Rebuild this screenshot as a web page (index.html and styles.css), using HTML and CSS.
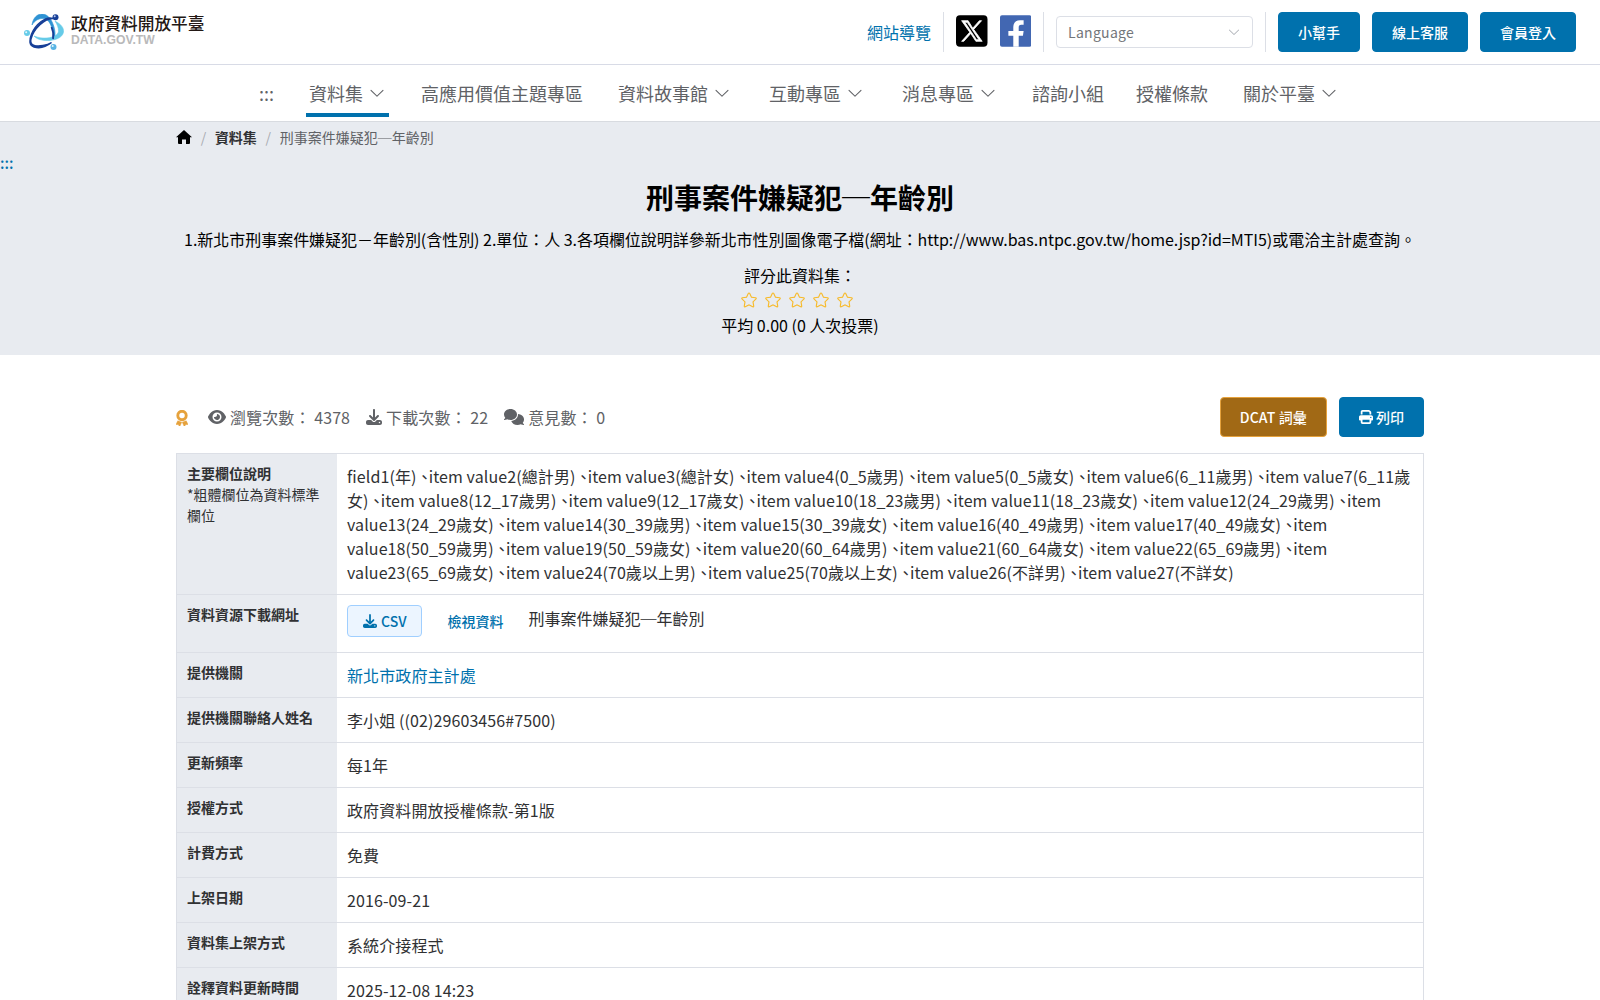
FILE: index.html
```html
<!DOCTYPE html>
<html lang="zh-Hant">
<head>
<meta charset="utf-8">
<title>刑事案件嫌疑犯─年齡別 | 政府資料開放平臺</title>
<link rel="stylesheet" href="styles.css">
</head>
<body>
<svg class="sprite" aria-hidden="true">
  <symbol id="i-down" viewBox="0 0 1024 1024"><path d="M831.9 340.9 512 652.700 192.100 340.900a30.600 30.600 0 0 0-42.700 0 29.100 29.100 0 0 0 0 41.600L489.700 714.200a32 32 0 0 0 44.600 0l340.300-331.700a29.100 29.100 0 0 0 0-41.700 30.600 30.600 0 0 0-42.700 0z"/></symbol>
  <symbol id="i-star" viewBox="0 0 1024 1024"><path d="m512 747.840 228.160 119.936a6.400 6.400 0 0 0 9.280-6.720l-43.520-254.080 184.512-179.904a6.400 6.400 0 0 0-3.520-10.880l-255.104-37.120L517.760 147.904a6.400 6.400 0 0 0-11.520 0L392.192 379.072l-255.104 37.120a6.400 6.400 0 0 0-3.520 10.880L318.080 606.976l-43.584 254.080a6.400 6.400 0 0 0 9.280 6.720L512 747.840zM313.600 924.480a70.400 70.400 0 0 1-102.144-74.240l37.888-220.864L88.960 472.960A70.400 70.400 0 0 1 128 352.896l221.760-32.256 99.200-200.960a70.400 70.400 0 0 1 126.208 0l99.200 200.960 221.824 32.256a70.400 70.400 0 0 1 39.040 120.064L774.720 629.376l37.888 220.864a70.400 70.400 0 0 1-102.144 74.240L512 820.096l-198.400 104.320z"/></symbol>
  <symbol id="i-download" viewBox="0 0 512 512"><path d="M288 32c0-17.700-14.300-32-32-32s-32 14.300-32 32V274.700l-73.400-73.400c-12.500-12.500-32.800-12.500-45.300 0s-12.500 32.800 0 45.300l128 128c12.500 12.500 32.800 12.500 45.300 0l128-128c12.500-12.500 12.500-32.800 0-45.300s-32.800-12.500-45.300 0L288 274.700V32zM64 352c-35.300 0-64 28.700-64 64v32c0 35.300 28.700 64 64 64H448c35.300 0 64-28.700 64-64V416c0-35.300-28.700-64-64-64H346.500l-45.300 45.300c-25 25-65.500 25-90.500 0L165.500 352H64zm368 56a24 24 0 1 1 0 48 24 24 0 1 1 0-48z"/></symbol>
</svg>

<header class="topbar">
  <a class="logo" href="#">
    <svg class="logo-mark" viewBox="0 0 40 38">
      <path d="M8 11C9 3 14 0 18 0c6 0 10 6 12 13 1 4 1.500 7 .5 11l-1.500.5c.4-4-.2-8-1.500-11.500C25.500 7 22.500 4.500 18.500 4.500 14 4.500 10.500 7 8 11z" fill="#2f93d4" stroke="#2f93d4" stroke-width=".6"/>
      <path d="M31 7c6 3 9 7 8.500 11-.8 6-9 8.500-16 8.500-6 0-11-1.500-13.500-4.500 5 2 9 2.300 13 2 6-.5 11-3 11.500-6.500.3-3.500-1.500-7.500-3.500-10.500z" fill="#66cbe8" stroke="#66cbe8" stroke-width=".6"/>
      <path d="M29 4.500C21 4 9.500 15 7 25c-1.500 6 4 8 12 6.500 3-.6 6-1.500 8.500-3C22 33 15 34.500 10 33c-5-1.500-5-7-2.500-13C11.500 10.500 22 1.500 29 4.500z" fill="#173f97" stroke="#173f97" stroke-width="1.400"/>
      <path d="M27.500 13c1.800 4 2.300 8 1.500 12" fill="none" stroke="#173f97" stroke-width="1.800"/>
      <circle cx="31.500" cy="3.200" r="3" fill="#173f97"/><circle cx="30.700" cy="2.300" r="1" fill="#b8c8ec"/>
      <circle cx="3" cy="19" r="3" fill="#66cbe8"/><circle cx="2.200" cy="18.200" r="1" fill="#e6f7fc"/>
      <circle cx="29.500" cy="33" r="3" fill="#5ab4e4"/><circle cx="28.700" cy="32" r="1" fill="#e6f7fc"/>
    </svg>
    <span class="logo-text"><b>政府資料開放平臺</b><i>DATA.GOV.TW</i></span>
  </a>
  <div class="tools">
    <a class="sitemap" href="#">網站導覽</a>
    <span class="rule"></span>
    <svg class="social" viewBox="0 0 32 32"><rect width="32" height="32" rx="4"/><path d="M18 14.400 26 5.500h-2.200l-6.800 7.600L12.300 5.500H5.700l8.300 11.700L5.700 26.500h2.200l7.100-8 5.200 8h6.400zM9 7.200h2.400l11.900 17.600h-2.500z" fill="#fff" stroke="#fff" stroke-width=".8"/></svg>
    <svg class="social" viewBox="0 0 32 32"><rect width="32" height="32" rx="2" fill="#4267b2"/><path d="M13.500 32V20.800H8.500V16h5v-4c0-4.500 2.500-7 6.800-7H24v4.600h-2.300c-2.200 0-2.700 1-2.700 2.600V16h5l-.7 4.800H19V32z" fill="#fff"/></svg>
    <span class="rule"></span>
    <div class="select"><span>Language</span><svg class="caret"><use href="#i-down"/></svg></div>
    <span class="rule"></span>
    <a class="btn" href="#">小幫手</a>
    <a class="btn" href="#">線上客服</a>
    <a class="btn" href="#">會員登入</a>
  </div>
</header>

<nav class="mainnav">
  <a href="#">:::</a>
  <a class="drop active" href="#">資料集<svg><use href="#i-down"/></svg></a>
  <a href="#">高應用價值主題專區</a>
  <a class="drop" href="#">資料故事館<svg><use href="#i-down"/></svg></a>
  <a class="drop" href="#">互動專區<svg><use href="#i-down"/></svg></a>
  <a class="drop" href="#">消息專區<svg><use href="#i-down"/></svg></a>
  <a href="#">諮詢小組</a>
  <a href="#">授權條款</a>
  <a class="drop" href="#">關於平臺<svg><use href="#i-down"/></svg></a>
</nav>

<section class="hero">
  <div class="crumbs container">
    <svg class="home" viewBox="0 0 16 14"><path d="M8 0 16 7.200h-2V13a1 1 0 0 1-1 1h-3V9.500H6V14H3a1 1 0 0 1-1-1V7.200H0z"/></svg>
    <span class="slash">/</span><b>資料集</b><span class="slash">/</span><span>刑事案件嫌疑犯─年齡別</span>
  </div>
  <a class="anchor" href="#">:::</a>
  <h1>刑事案件嫌疑犯─年齡別</h1>
  <p class="desc">1.新北市刑事案件嫌疑犯－年齡別(含性別) 2.單位：人 3.各項欄位說明詳參新北市性別圖像電子檔(網址：http://www.bas.ntpc.gov.tw/home.jsp?id=MTI5)或電洽主計處查詢。</p>
  <div class="rating">
    <div>評分此資料集：</div>
    <div class="stars"><svg><use href="#i-star"/></svg><svg><use href="#i-star"/></svg><svg><use href="#i-star"/></svg><svg><use href="#i-star"/></svg><svg><use href="#i-star"/></svg></div>
    <div>平均 0.00 (0 人次投票)</div>
  </div>
</section>

<main class="container">
  <div class="meta">
    <svg class="award" viewBox="0 0 12 16"><circle cx="6" cy="5.500" r="4.200" fill="none" stroke="currentColor" stroke-width="2.900"/><path d="M1.800 10.800 0 14.500l2.200-.1L3.200 16h.8l1.700-3.800zM10.200 10.800 12 14.500l-2.200-.1L8.800 16H8l-1.700-3.800z" stroke="currentColor" stroke-width=".5"/></svg>
    <span class="stat"><svg class="eye" viewBox="0 0 576 512"><path d="M288 32c-80.800 0-145.500 36.800-192.600 80.600C48.600 156 17.300 208 2.500 243.700c-3.300 7.900-3.300 16.700 0 24.600C17.300 304 48.600 356 95.400 399.400C142.500 443.200 207.200 480 288 480s145.500-36.800 192.600-80.600c46.800-43.500 78.100-95.400 93-131.100c3.300-7.900 3.300-16.700 0-24.600c-14.900-35.700-46.200-87.700-93-131.100C433.500 68.800 368.800 32 288 32zM144 256a144 144 0 1 1 288 0 144 144 0 1 1 -288 0zm144-64c0 35.300-28.700 64-64 64c-7.100 0-13.900-1.200-20.300-3.300c-5.500-1.800-11.900 1.600-11.700 7.400c.3 6.900 1.300 13.800 3.200 20.700c13.700 51.200 66.400 81.600 117.600 67.900s81.600-66.400 67.900-117.600c-11.100-41.500-47.800-69.400-88.600-71.100c-5.800-.2-9.200 6.100-7.400 11.700c2.100 6.400 3.300 13.200 3.300 20.300z"/></svg>瀏覽次數： 4378</span>
    <span class="stat"><svg><use href="#i-download"/></svg>下載次數： 22</span>
    <span class="stat"><svg class="talk" viewBox="0 0 640 512"><path d="M208 352c114.900 0 208-78.800 208-176S322.900 0 208 0S0 78.800 0 176c0 38.600 14.700 74.300 39.600 103.400c-3.500 9.400-8.700 17.700-14.200 24.700c-4.800 6.200-9.700 11-13.300 14.300c-1.800 1.600-3.300 2.900-4.300 3.700c-10.300 8.300-9.800 13-7 20.600S8.800 352 16 352c21.800 0 43.800-5.600 62.100-12.500c9.200-3.500 17.800-7.400 25.300-11.400C134.100 343.300 169.800 352 208 352zM448 176c0 112.300-99.100 196.900-216.500 207C255.800 457.400 336.400 512 432 512c38.200 0 73.900-8.700 104.700-23.900c7.500 4 16 7.900 25.200 11.400c18.300 6.900 40.300 12.500 62.100 12.500c6.900 0 13.100-4.500 15.200-11.100c2.100-6.600-.2-13.800-5.800-17.900c-1-.8-2.500-2-4.300-3.700c-3.600-3.300-8.500-8.100-13.300-14.300c-5.500-7-10.700-15.400-14.200-24.700c24.900-29 39.600-64.700 39.600-103.400c0-92.800-84.900-168.900-192.600-175.500c.4 5.100 .6 10.300 .6 15.500z"/></svg>意見數： 0</span>
    <div class="actions">
      <a class="btn dcat" href="#">DCAT 詞彙</a>
      <a class="btn" href="#"><svg viewBox="0 0 512 512"><path d="M128 0C92.700 0 64 28.700 64 64v96h64V64H354.700L384 93.300V160h64V93.300c0-17-6.700-33.300-18.700-45.300L400 18.700C388 6.700 371.700 0 354.700 0H128zM384 352v32 64H128V384 368 352H384zm64 32h32c17.700 0 32-14.300 32-32V256c0-35.300-28.700-64-64-64H64c-35.300 0-64 28.700-64 64v96c0 17.700 14.300 32 32 32H64v64c0 35.300 28.700 64 64 64H384c35.300 0 64-28.700 64-64V384zM432 248a24 24 0 1 1 0 48 24 24 0 1 1 0-48z"/></svg>列印</a>
    </div>
  </div>

  <table class="detail">
    <tr><th>主要欄位說明<small>*粗體欄位為資料標準欄位</small></th><td>field1(年)<i>、</i>item value2(總計男)<i>、</i>item value3(總計女)<i>、</i>item value4(0_5歲男)<i>、</i>item value5(0_5歲女)<i>、</i>item value6(6_11歲男)<i>、</i>item value7(6_11歲女)<i>、</i>item value8(12_17歲男)<i>、</i>item value9(12_17歲女)<i>、</i>item value10(18_23歲男)<i>、</i>item value11(18_23歲女)<i>、</i>item value12(24_29歲男)<i>、</i>item value13(24_29歲女)<i>、</i>item value14(30_39歲男)<i>、</i>item value15(30_39歲女)<i>、</i>item value16(40_49歲男)<i>、</i>item value17(40_49歲女)<i>、</i>item value18(50_59歲男)<i>、</i>item value19(50_59歲女)<i>、</i>item value20(60_64歲男)<i>、</i>item value21(60_64歲女)<i>、</i>item value22(65_69歲男)<i>、</i>item value23(65_69歲女)<i>、</i>item value24(70歲以上男)<i>、</i>item value25(70歲以上女)<i>、</i>item value26(不詳男)<i>、</i>item value27(不詳女)</td></tr>
    <tr><th>資料資源下載網址</th><td><div class="resource"><a class="csv" href="#"><svg><use href="#i-download"/></svg>CSV</a><a class="view" href="#">檢視資料</a><span>刑事案件嫌疑犯─年齡別</span></div></td></tr>
    <tr><th>提供機關</th><td><a href="#">新北市政府主計處</a></td></tr>
    <tr><th>提供機關聯絡人姓名</th><td>李小姐 ((02)29603456#7500)</td></tr>
    <tr><th>更新頻率</th><td>每1年</td></tr>
    <tr><th>授權方式</th><td>政府資料開放授權條款-第1版</td></tr>
    <tr><th>計費方式</th><td>免費</td></tr>
    <tr><th>上架日期</th><td>2016-09-21</td></tr>
    <tr><th>資料集上架方式</th><td>系統介接程式</td></tr>
    <tr><th>詮釋資料更新時間</th><td>2025-12-08 14:23</td></tr>
  </table>
</main>
</body>
</html>
```
FILE: styles.css
```css
* { box-sizing: border-box; }
html { overflow: hidden; }
body {
  margin: 0;
  height: 1000px;
  overflow: hidden;
  background: #fff;
  color: #303133;
  font: 16px/24px "Noto Sans CJK TC", sans-serif;
}
a { color: #0071ad; text-decoration: none; }
svg { fill: currentColor; flex: none; }
.sprite { display: none; }
.container { width: 1248px; margin: 0 auto; }

.topbar {
  display: flex;
  justify-content: space-between;
  align-items: center;
  height: 65px;
  padding: 0 24px;
  border-bottom: 1px solid #d8dbe6;
}
.logo { display: flex; align-items: center; gap: 7px; }
.logo-mark { width: 40px; height: 38px; margin-top: 1px; }
.logo-text { display: flex; flex-direction: column; padding-bottom: 2px; }
.logo-text b { color: #231815; font-size: 16.7px; font-weight: 500; line-height: 18px; }
.logo-text i { color: #b9b9ba; font: bold 12.2px/16px "Liberation Sans", sans-serif; }
.tools { display: flex; align-items: center; gap: 12px; }
.rule { width: 1px; height: 40px; background: #dcdfe6; }
.social { width: 31.5px; height: 32px; margin-top: -2px; color: #000; }
.select {
  display: flex;
  align-items: center;
  justify-content: space-between;
  width: 197px;
  height: 32px;
  padding: 0 11px;
  border: 1px solid #dcdfe6;
  border-radius: 4px;
  color: #73767a;
  font-size: 14px;
  letter-spacing: .3px;
}
.caret { width: 14px; height: 14px; color: #a8abb2; }
.btn {
  display: flex;
  align-items: center;
  gap: 3px;
  height: 40px;
  padding: 0 19px;
  border: 1px solid #0071ad;
  border-radius: 4px;
  background: #0071ad;
  color: #fff;
  font-size: 14px;
  font-weight: 500;
}
.btn svg { width: 14px; height: 14px; }
.dcat { background: #a16915; border-color: #e6a23c; letter-spacing: .14px; }

.mainnav {
  display: flex;
  justify-content: center;
  gap: 32px;
  height: 57px;
  border-bottom: 1px solid #d8dbe0;
  font-size: 18px;
}
.mainnav a { display: flex; align-items: center; height: 52px; padding-top: 4px; color: #606266; }
.mainnav .drop { padding-left: 3px; padding-right: 3px; border-bottom: 4px solid transparent; padding-top: 8px; }
.mainnav .active { border-color: #0071ad; }
.mainnav svg { width: 18px; height: 18px; margin-left: 5px; }

.hero { height: 233px; background: #e8ebf0; color: #000; text-align: center; }
.crumbs { display: flex; align-items: center; height: 30px; font-size: 14px; color: #606266; }
.crumbs b { color: #303133; }
.home { width: 16px; height: 14px; color: #000; }
.slash { margin: 0 8.7px; color: #a8abb2; }
.anchor { display: block; height: 24px; line-height: 22px; font-size: 15px; font-weight: 500; text-align: left; }
h1 { margin: 0; font-size: 28px; line-height: 42px; }
.desc { margin: 9px 0 12px; letter-spacing: -.035px; }
.stars { display: flex; justify-content: center; gap: 6px; height: 26px; padding-right: 6px; align-items: center; color: #f7ba2a; }
.stars svg { width: 18px; height: 18px; }

.meta { display: flex; align-items: center; height: 40px; margin: 42px 0 16px; color: #606266; }
.award { width: 12px; height: 16px; margin-right: 20px; margin-top: 2px; color: #e6a23c; }
.stat { display: flex; align-items: center; gap: 4px; margin-right: 16px; white-space: pre; letter-spacing: .1px; }
.stat svg { width: 16px; height: 16px; }
.stat .eye { width: 18px; }
.stat .talk { width: 20px; }
.actions { display: flex; gap: 12px; margin-left: auto; }

.detail { width: 1248px; border-collapse: collapse; table-layout: fixed; border: 1px solid #dcdfe6; }
.detail tr { border-top: 1px solid #dcdfe6; }
.detail th, .detail td { padding: 10px; vertical-align: top; text-align: left; }
.detail th { width: 160px; padding: 9px 10px 10px; background: #e8ebf0; font-size: 14px; line-height: 21px; }
.detail td { padding-left: 10.5px; letter-spacing: .1px; }
.detail small { display: block; font-size: 14px; font-weight: 400; }
.detail i { margin-left: 4px; font-style: normal; font-feature-settings: "halt"; }
.resource { display: flex; margin-bottom: 5px; letter-spacing: 0; }
.resource a { display: flex; align-items: center; height: 32px; font-size: 14px; font-weight: 500; }
.csv { gap: 4px; padding: 0 15px; border: 1px solid #a0cfff; border-radius: 4px; background: #ecf5ff; }
.csv svg { width: 14px; height: 14px; }
.view { margin: 0 25px; }
.resource span { padding-top: 1px; }
```
